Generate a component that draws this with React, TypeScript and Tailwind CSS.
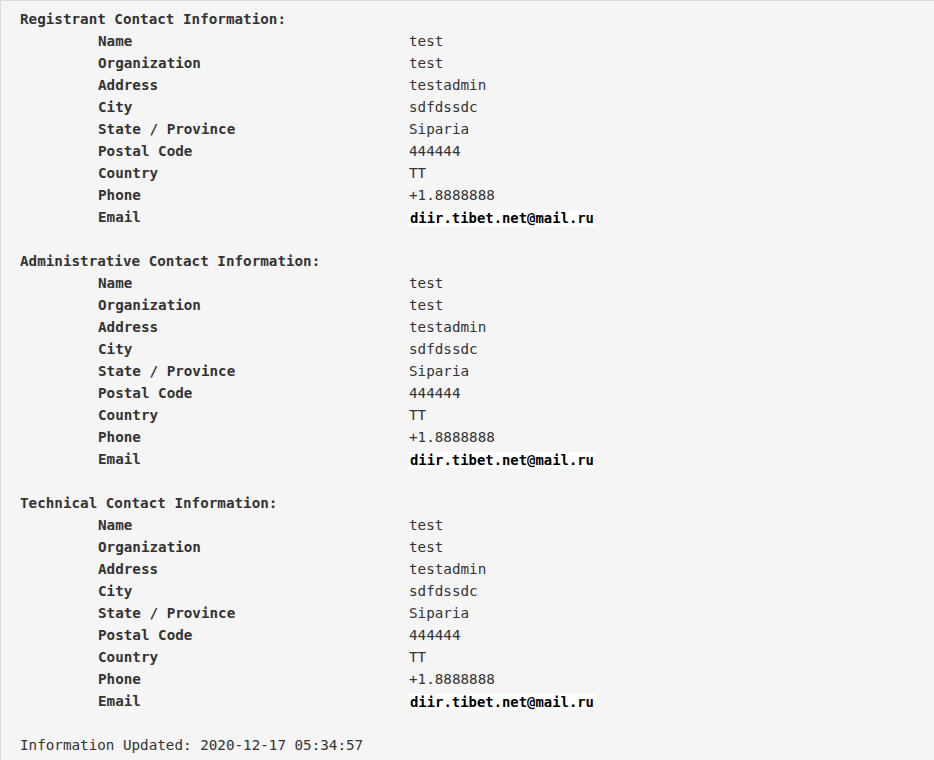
const contact = [
  ['Name', 'test'],
  ['Organization', 'test'],
  ['Address', 'testadmin'],
  ['City', 'sdfdssdc'],
  ['State / Province', 'Siparia'],
  ['Postal Code', '444444'],
  ['Country', 'TT'],
  ['Phone', '+1.8888888'],
]

const sections = ['Registrant Contact Information:', 'Administrative Contact Information:', 'Technical Contact Information:']

function Section({ title }: { title: string }) {
  return (
    <div className="mb-[22px]">
      <div className="font-bold">{title}</div>
      {contact.map(([label, value]) => (
        <div key={label} className="flex">
          <div className="w-[389px] shrink-0 pl-[78px] font-bold">{label}</div>
          <div>{value}</div>
        </div>
      ))}
      <div className="flex">
        <div className="w-[389px] shrink-0 pl-[78px] font-bold">Email</div>
        <div className="flex items-end">
          <span className="mb-[2px] inline-block bg-white px-px text-[13.9px] font-bold leading-[16px] text-black">
            diir.tibet.net@mail.ru
          </span>
        </div>
      </div>
    </div>
  )
}

export default function App() {
  return (
    <div className="h-[760px] w-[934px] overflow-hidden border-l border-t border-[#dcdcdc] bg-[#f5f5f5]">
      <div className="whitespace-pre pl-[19px] pt-[7px] font-['DejaVu_Sans_Mono',monospace] text-[14.25px] leading-[22px] text-[#333]">
        {sections.map((s) => (
          <Section key={s} title={s} />
        ))}
        <div>Information Updated: 2020-12-17 05:34:57</div>
      </div>
    </div>
  )
}
